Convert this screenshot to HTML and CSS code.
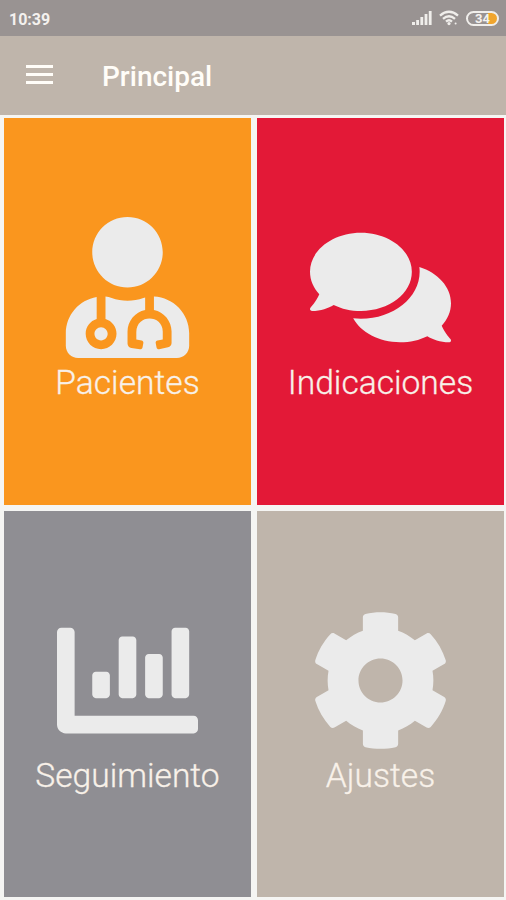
FILE: index.html
```html
<!DOCTYPE html>
<html lang="es">
<head>
    <meta charset="UTF-8">
    <meta name="viewport" content="width=device-width, initial-scale=1.0">
    <title>Principal</title>
    <link rel="stylesheet" href="styles.css">
</head>
<body>
    <div class="status-bar">
        <span class="clock">10:39</span>
        <div class="status-icons">
            <svg class="signal" viewBox="0 0 20 16">
                <path d="M0 12h3v3H0zM4.2 10h2.8v5H4.2zM8.4 7h2.8v8H8.4zM12.6 4h2.8v11h-2.8zM16.8 1h2.8v14h-2.8z"/>
            </svg>
            <svg class="wifi" viewBox="0 0 20 16">
                <path d="M1 5.6Q10-2 19 5.6M4 8.8Q10 3.6 16 8.8M7 11.6Q10 9 13 11.6"/>
                <circle cx="10" cy="13.6" r="1.6"/>
                <circle cx="16.6" cy="13.6" r="1"/>
            </svg>
            <div class="battery"><span>34</span></div>
        </div>
    </div>
    <header class="app-bar">
        <button class="menu-btn" aria-label="Menú"><i></i><i></i><i></i></button>
        <h1 class="title">Principal</h1>
    </header>
    <main class="grid">
        <a class="tile orange">
            <svg class="icon" viewBox="0 0 448 512"><path d="M224 256c70.7 0 128-57.3 128-128S294.7 0 224 0 96 57.3 96 128s57.3 128 128 128zM104 424c0 13.3 10.7 24 24 24s24-10.7 24-24-10.7-24-24-24-24 10.7-24 24zm216-135.4v49c36.5 7.4 64 39.8 64 78.4v41.7c0 7.6-5.4 14.2-12.9 15.7l-32.2 6.4c-4.3.9-8.5-1.9-9.4-6.3l-3.1-15.7c-.9-4.3 1.9-8.6 6.3-9.4l19.3-3.9V416c0-62.8-96-65.1-96 1.9v26.7l19.3 3.9c4.3.9 7.1 5.1 6.3 9.4l-3.1 15.7c-.9 4.3-5.1 7.1-9.4 6.3l-31.2-4.2c-7.9-1.1-13.8-7.8-13.8-15.9V416c0-38.6 27.5-70.9 64-78.4v-45.2c-2.2.7-4.4 1.1-6.6 1.9-18 6.3-37.3 9.8-57.4 9.8s-39.4-3.5-57.4-9.8c-7.4-2.6-14.9-4.2-22.6-5.2v81.6c23.1 6.9 40 28.1 40 53.4 0 30.9-25.1 56-56 56s-56-25.1-56-56c0-25.3 16.9-46.5 40-53.4v-80.4C48.5 301 0 355.8 0 422.4v44.8C0 491.9 20.1 512 44.8 512h358.4c24.7 0 44.8-20.1 44.8-44.8v-44.8c0-72-56.8-130.3-128-133.8z"/></svg>
            <span class="label">Pacientes</span>
        </a>
        <a class="tile red">
            <svg class="icon" viewBox="0 0 576 512"><path d="M416 192c0-88.4-93.1-160-208-160S0 103.6 0 192c0 34.3 14.1 65.9 38 92-13.4 30.2-35.5 54.2-35.8 54.5-2.2 2.3-2.8 5.7-1.5 8.7S4.8 352 8 352c36.6 0 66.9-12.3 88.7-25 32.2 15.7 70.3 25 111.3 25 114.9 0 208-71.6 208-160zm122 220c23.9-26 38-57.7 38-92 0-66.9-53.5-124.2-129.3-148.1.9 6.6 1.3 13.3 1.3 20.1 0 105.9-107.7 192-240 192-10.8 0-21.3-.8-31.7-1.9C207.8 439.6 281.8 480 368 480c41 0 79.1-9.2 111.3-25 21.8 12.7 52.1 25 88.7 25 3.2 0 6.1-1.9 7.3-4.8 1.3-2.9.7-6.3-1.5-8.7-.3-.3-22.4-24.2-35.8-54.5z"/></svg>
            <span class="label">Indicaciones</span>
        </a>
        <a class="tile gray">
            <svg class="icon" viewBox="0 0 512 512"><path d="M332.8 320h38.4c6.4 0 12.8-6.4 12.8-12.8V172.8c0-6.4-6.4-12.8-12.8-12.8h-38.4c-6.4 0-12.8 6.4-12.8 12.8v134.4c0 6.4 6.4 12.8 12.8 12.8zm96 0h38.4c6.4 0 12.8-6.4 12.8-12.8V76.8c0-6.4-6.4-12.8-12.8-12.8h-38.4c-6.4 0-12.8 6.4-12.8 12.8v230.4c0 6.4 6.4 12.8 12.8 12.8zm-288 0h38.4c6.4 0 12.8-6.4 12.8-12.8v-70.4c0-6.4-6.4-12.8-12.8-12.8h-38.4c-6.4 0-12.8 6.4-12.8 12.8v70.4c0 6.4 6.4 12.8 12.8 12.8zm96 0h38.4c6.4 0 12.8-6.4 12.8-12.8V108.8c0-6.4-6.4-12.8-12.8-12.8h-38.4c-6.4 0-12.8 6.4-12.8 12.8v198.4c0 6.4 6.4 12.8 12.8 12.8zM496 384H64V80c0-8.84-7.16-16-16-16H16C7.16 64 0 71.16 0 80v336c0 17.67 14.33 32 32 32h464c8.84 0 16-7.16 16-16v-32c0-8.84-7.16-16-16-16z"/></svg>
            <span class="label">Seguimiento</span>
        </a>
        <a class="tile beige">
            <svg class="icon" viewBox="0 0 512 512"><path d="M487.4 315.7l-42.6-24.6c4.3-23.2 4.3-47 0-70.2l42.6-24.6c4.9-2.8 7.1-8.6 5.5-14-11.1-35.6-30-67.8-54.7-94.6-3.8-4.1-10-5.1-14.8-2.3L380.8 110c-17.9-15.4-38.5-27.3-60.8-35.1V25.8c0-5.6-3.9-10.5-9.4-11.7-36.7-8.2-74.3-7.8-109.2 0-5.5 1.2-9.4 6.1-9.4 11.7V75c-22.2 7.9-42.8 19.8-60.8 35.1L88.7 85.5c-4.9-2.8-11-1.9-14.8 2.3-24.7 26.7-43.6 58.9-54.7 94.6-1.7 5.4.6 11.2 5.5 14L67.3 221c-4.3 23.2-4.3 47 0 70.2l-42.6 24.6c-4.9 2.8-7.1 8.6-5.5 14 11.1 35.6 30 67.8 54.7 94.6 3.8 4.1 10 5.1 14.8 2.3l42.6-24.6c17.9 15.4 38.5 27.3 60.8 35.1v49.2c0 5.6 3.9 10.5 9.4 11.7 36.7 8.2 74.3 7.8 109.2 0 5.5-1.2 9.4-6.1 9.4-11.7v-49.2c22.2-7.9 42.8-19.8 60.8-35.1l42.6 24.6c4.9 2.8 11 1.9 14.8-2.3 24.7-26.7 43.6-58.9 54.7-94.6 1.5-5.5-.7-11.3-5.6-14.1zM256 336c-44.1 0-80-35.9-80-80s35.9-80 80-80 80 35.9 80 80-35.9 80-80 80z"/></svg>
            <span class="label">Ajustes</span>
        </a>
    </main>
</body>
</html>
```
FILE: styles.css
```css
* {
    box-sizing: border-box;
}
body {
    margin: 0;
    height: 900px;
    display: flex;
    flex-direction: column;
    background-color: #f5f5f3;
    font-family: Roboto, sans-serif;
    overflow: hidden;
}
.status-bar {
    height: 36px;
    padding: 2px 7px 0 9px;
    display: flex;
    justify-content: space-between;
    align-items: center;
    background-color: #999392;
    color: #f4f1ee;
}
.clock {
    font-size: 16px;
    font-weight: 700;
}
.status-icons {
    display: flex;
    align-items: center;
    gap: 7px;
    margin-bottom: 2px;
}
.signal,
.wifi {
    width: 20px;
    height: 16px;
    fill: #f0eeeb;
}
.wifi path {
    fill: none;
    stroke: #f0eeeb;
    stroke-width: 2.3;
}
.battery {
    width: 33px;
    height: 15px;
    border: 2px solid #f0eeeb;
    border-radius: 8px;
    background: linear-gradient(to right, transparent 20px, #f0a52e 20px);
    font-size: 13px;
    font-weight: 700;
    line-height: 11px;
    text-align: center;
}
.app-bar {
    height: 79px;
    padding: 2px 26px 0;
    display: flex;
    align-items: center;
    gap: 49px;
    background-color: #bfb5ab;
}
.menu-btn {
    width: 27px;
    padding: 0;
    border: none;
    background: none;
    display: flex;
    flex-direction: column;
    gap: 5px;
    margin-bottom: 5px;
    cursor: pointer;
}
.menu-btn i {
    height: 3px;
    background-color: #fffdf8;
}
.title {
    margin: 0;
    font-size: 28px;
    font-weight: 500;
    color: #fffdf8;
}
.grid {
    flex: 1;
    display: grid;
    grid-template-columns: 1fr 1fr;
    grid-template-rows: 1fr 1fr;
    gap: 6px;
    padding: 3px 2px 3px 4px;
}
.tile {
    display: flex;
    flex-direction: column;
    align-items: center;
    justify-content: center;
    cursor: pointer;
}
.orange {
    background-color: #fa961e;
}
.red {
    background-color: #e31937;
}
.gray {
    background-color: #8f8e93;
}
.beige {
    background-color: #bfb5ab;
}
.icon {
    width: 141px;
    height: 141px;
    fill: #ebebeb;
}
.label {
    margin-top: 3px;
    font-size: 33.6px;
    font-weight: 300;
    line-height: 44px;
    color: #f8f1e9;
    -webkit-text-stroke: 0.3px #f8f1e9;
}
```
